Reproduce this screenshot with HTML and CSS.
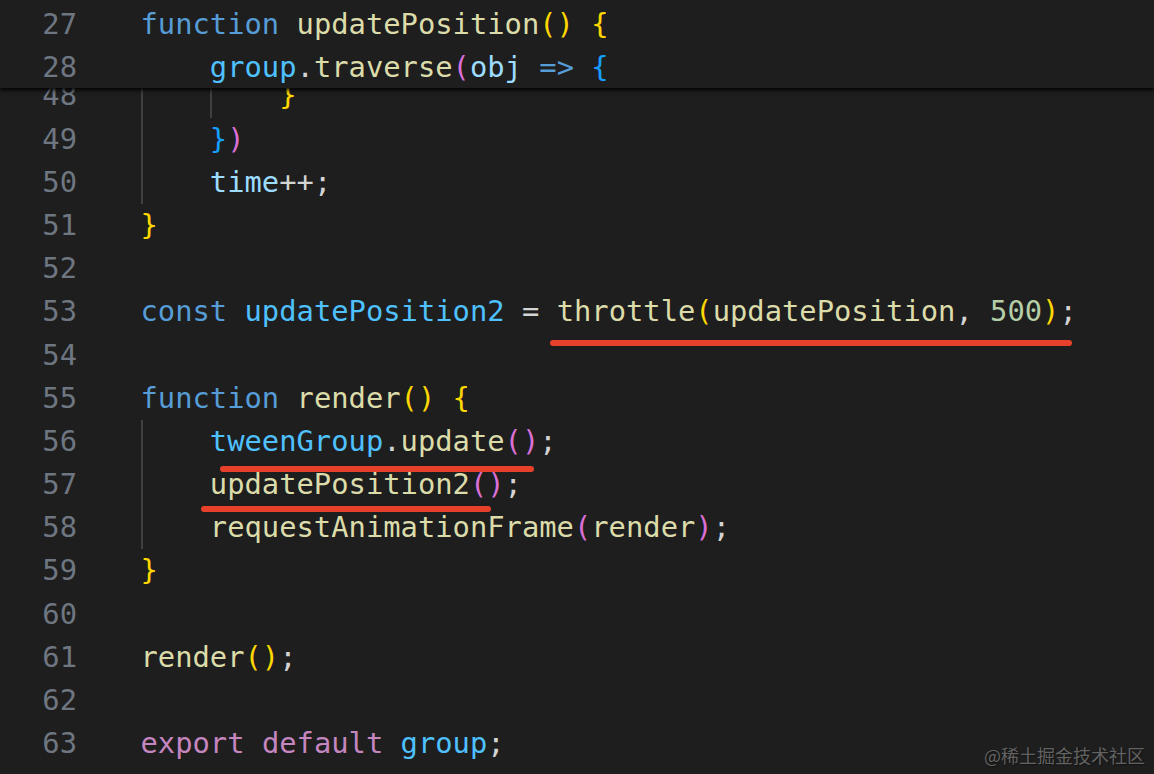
FILE: index.html
```html
<!DOCTYPE html>
<html lang="zh">
<head>
<meta charset="utf-8">
<title>editor</title>
<link rel="stylesheet" href="styles.css">
</head>
<body>
<div class="editor">
  <div class="sticky">
    <div class="row"><span class="ln">27</span><span class="code"><span class="kw">function</span> <span class="fn">updatePosition</span><span class="b1">()</span> <span class="b1">{</span></span></div>
    <div class="row"><span class="ln">28</span><span class="code">    <span class="cst">group</span><span class="pn">.</span><span class="fn">traverse</span><span class="b2">(</span><span class="var">obj</span> <span class="kw">=&gt;</span> <span class="b3">{</span></span></div>
  </div>

  <div class="lines">
    <div class="row"><span class="ln">48</span><span class="ind"></span><span class="ind"></span><span class="code"><span class="b1">}</span></span></div>
    <div class="row"><span class="ln">49</span><span class="ind"></span><span class="code"><span class="b3">}</span><span class="b2">)</span></span></div>
    <div class="row"><span class="ln">50</span><span class="ind"></span><span class="code"><span class="var">time</span><span class="pn">++;</span></span></div>
    <div class="row"><span class="ln">51</span><span class="code"><span class="b1">}</span></span></div>
    <div class="row"><span class="ln">52</span><span class="code"></span></div>
    <div class="row"><span class="ln">53</span><span class="code"><span class="kw">const</span> <span class="cst">updatePosition2</span> <span class="pn">=</span> <span class="fn">throttle</span><span class="b1">(</span><span class="fn">updatePosition</span><span class="pn">,</span> <span class="num">500</span><span class="b1">)</span><span class="pn">;</span></span></div>
    <div class="row"><span class="ln">54</span><span class="code"></span></div>
    <div class="row"><span class="ln">55</span><span class="code"><span class="kw">function</span> <span class="fn">render</span><span class="b1">()</span> <span class="b1">{</span></span></div>
    <div class="row"><span class="ln">56</span><span class="ind"></span><span class="code"><span class="cst">tweenGroup</span><span class="pn">.</span><span class="fn">update</span><span class="b2">()</span><span class="pn">;</span></span></div>
    <div class="row"><span class="ln">57</span><span class="ind"></span><span class="code"><span class="fn">updatePosition2</span><span class="b2">()</span><span class="pn">;</span></span></div>
    <div class="row"><span class="ln">58</span><span class="ind"></span><span class="code"><span class="fn">requestAnimationFrame</span><span class="b2">(</span><span class="fn">render</span><span class="b2">)</span><span class="pn">;</span></span></div>
    <div class="row"><span class="ln">59</span><span class="code"><span class="b1">}</span></span></div>
    <div class="row"><span class="ln">60</span><span class="code"></span></div>
    <div class="row"><span class="ln">61</span><span class="code"><span class="fn">render</span><span class="b1">()</span><span class="pn">;</span></span></div>
    <div class="row"><span class="ln">62</span><span class="code"></span></div>
    <div class="row"><span class="ln">63</span><span class="code"><span class="ctl">export</span> <span class="ctl">default</span> <span class="cst">group</span><span class="pn">;</span></span></div>
  </div>

  <span class="mark mark-throttle"></span>
  <span class="mark mark-tween"></span>
  <span class="mark mark-update"></span>

  <div class="watermark">@稀土掘金技术社区</div>
</div>
</body>
</html>
```

FILE: styles.css
```css
html, body {
  margin: 0;
  padding: 0;
  background: #1e1e1e;
  overflow: hidden;
}

.editor {
  position: relative;
  width: 1154px;
  height: 774px;
  overflow: hidden;
  background: #1e1e1e;
  font-family: "DejaVu Sans Mono", "Liberation Mono", monospace;
  font-size: 28.8px;
  color: #d4d4d4;
}

.lines {
  padding-top: 74.4px;
}

.sticky {
  position: absolute;
  top: 0;
  left: 0;
  right: 0;
  z-index: 2;
  padding-top: 3px;
  height: 85px;
  overflow: hidden;
  background: #1e1e1e;
  box-shadow: 0 2px 4px #000;
}

.row {
  display: flex;
  height: 43.2px;
  line-height: 43.2px;
  white-space: pre;
}

.ln {
  width: 77px;
  margin-right: 63.5px;
  text-align: right;
  color: #6e7681;
  flex: none;
}

.ind {
  flex: none;
  width: 4ch;
  height: 43.2px;
  background: linear-gradient(#404040, #404040) no-repeat 0 0 / 2px 100%;
}

.code {
  white-space: pre;
}

.kw { color: #569cd6; }
.fn { color: #dcdcaa; }
.var { color: #9cdcfe; }
.cst { color: #4fc1ff; }
.num { color: #b5cea8; }
.ctl { color: #c586c0; }
.pn { color: #d4d4d4; }
.b1 { color: #ffd700; }
.b2 { color: #da70d6; }
.b3 { color: #179fff; }

.mark {
  position: absolute;
  height: 6px;
  border-radius: 3px;
  background: #e8412b;
  z-index: 3;
}

.mark-throttle { left: 550px; top: 340px; width: 522px; }
.mark-tween { left: 220px; top: 466px; width: 314px; }
.mark-update { left: 201px; top: 506px; width: 290px; }

.watermark {
  position: absolute;
  right: 9px;
  top: 744px;
  font-family: "Noto Sans CJK SC", "Noto Sans", sans-serif;
  font-size: 18px;
  line-height: 22px;
  color: #626262;
  text-shadow: 1px 1px 1px #111;
  z-index: 4;
}
```
